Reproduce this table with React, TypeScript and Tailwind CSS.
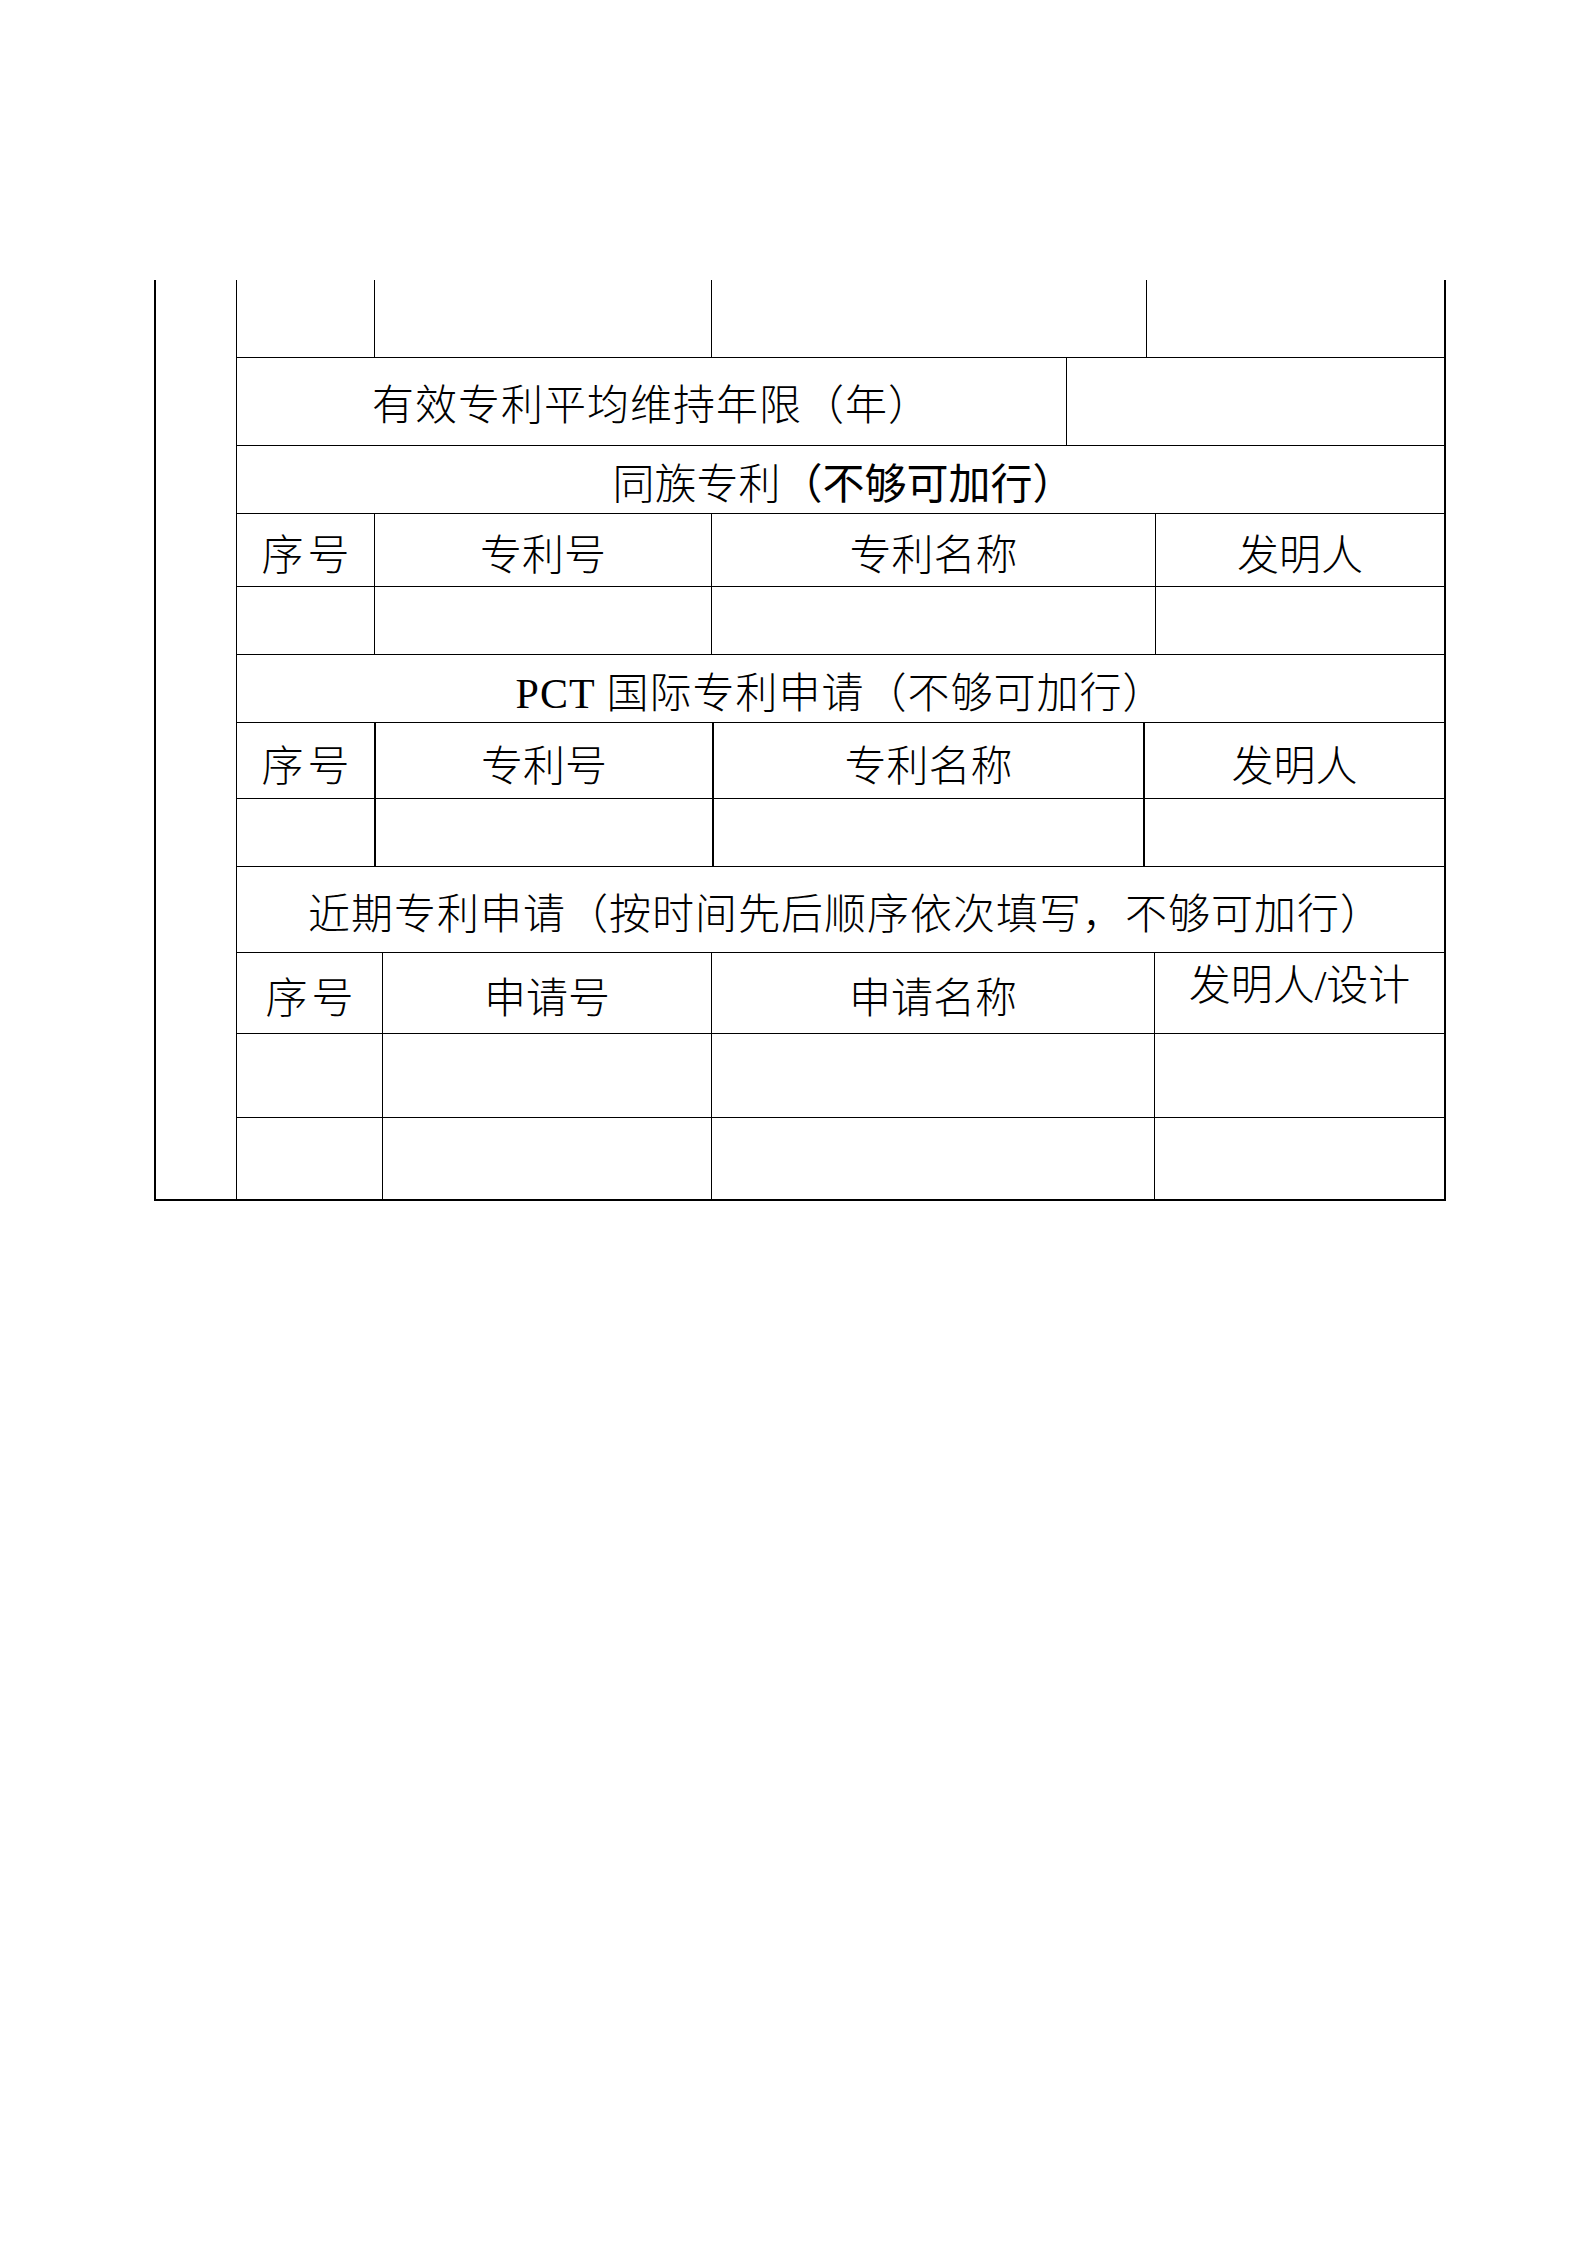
import React from "react";

const font = "font-['Liberation_Serif','Noto_Sans_CJK_SC',serif]";

type Cell = { w?: string; text?: React.ReactNode; extra?: string };

const Row = ({
  h,
  cells,
  last = false,
}: {
  h: string;
  cells: Cell[];
  last?: boolean;
}) => (
  <div className={`flex ${h} ${last ? "" : "border-b border-black"}`}>
    {cells.map((c, i) => (
      <div
        key={i}
        className={`flex items-center justify-center ${
          c.w ?? "flex-1"
        } ${i < cells.length - 1 ? "border-r border-black" : ""} ${
          c.extra ?? ""
        }`}
      >
        {c.text}
      </div>
    ))}
  </div>
);

export default function App() {
  const tz = [
    { w: "w-[138px]" },
    { w: "w-[337px]" },
    { w: "w-[444px]" },
    {},
  ];
  const pct = [
    { w: "w-[139px]", extra: "!border-r-2" },
    { w: "w-[338px]", extra: "!border-r-2" },
    { w: "w-[431px]", extra: "!border-r-2" },
    {},
  ];
  const jq = [
    { w: "w-[146px]" },
    { w: "w-[329px]" },
    { w: "w-[443px]" },
    {},
  ];

  const seq = <span className="tracking-[4px] pl-[4px]">序号</span>;

  return (
    <div
      className={`w-[1587px] h-[2245px] bg-white pt-[280px] pl-[154px] text-black text-[42px] leading-none font-light ${font}`}
    >
      <div className="flex w-[1292px] border-l-2 border-r-2 border-b-2 border-black">
        {/* merged left column carried over from previous page */}
        <div className="w-[81px] border-r border-black" />
        <div className="flex-1 flex flex-col">
          <Row
            h="h-[78px]"
            cells={[
              { w: "w-[138px]" },
              { w: "w-[337px]" },
              { w: "w-[435px]" },
              {},
            ]}
          />
          <Row
            h="h-[88px]"
            cells={[
              {
                w: "w-[830px]",
                text: "有效专利平均维持年限（年）",
                extra: "pt-[8px] tracking-[1px]",
              },
              {},
            ]}
          />
          <Row
            h="h-[68px]"
            cells={[
              {
                text: (
                  <span>
                    同族专利<span className="font-normal">（不够可加行）</span>
                  </span>
                ),
                extra: "pt-[10px] pl-[6px]",
              },
            ]}
          />
          <Row
            h="h-[73px]"
            cells={[
              { ...tz[0], text: seq, extra: "pt-[12px]" },
              { ...tz[1], text: "专利号", extra: "pt-[12px]" },
              { ...tz[2], text: "专利名称", extra: "pt-[12px]" },
              { ...tz[3], text: "发明人", extra: "pt-[12px]" },
            ]}
          />
          <Row h="h-[68px]" cells={tz} />
          <Row
            h="h-[68px]"
            cells={[
              {
                text: "PCT 国际专利申请（不够可加行）",
                extra: "pt-[10px] tracking-[1px]",
              },
            ]}
          />
          <Row
            h="h-[76px]"
            cells={[
              { ...pct[0], text: seq, extra: "!border-r-2 pt-[12px]" },
              { ...pct[1], text: "专利号", extra: "!border-r-2 pt-[12px]" },
              { ...pct[2], text: "专利名称", extra: "!border-r-2 pt-[12px]" },
              { ...pct[3], text: "发明人", extra: "pt-[12px]" },
            ]}
          />
          <Row h="h-[68px]" cells={pct} />
          <Row
            h="h-[86px]"
            cells={[
              {
                text: "近期专利申请（按时间先后顺序依次填写，不够可加行）",
                extra: "pt-[10px] pl-[10px] tracking-[1px]",
              },
            ]}
          />
          <Row
            h="h-[81px]"
            cells={[
              { ...jq[0], text: seq, extra: "pt-[12px]" },
              { ...jq[1], text: "申请号", extra: "pt-[12px]" },
              { ...jq[2], text: "申请名称", extra: "pt-[12px]" },
              { ...jq[3], text: "发明人/设计", extra: "pb-[14px]" },
            ]}
          />
          <Row h="h-[84px]" cells={jq} />
          <Row h="h-[81px]" cells={jq} last />
        </div>
      </div>
    </div>
  );
}
